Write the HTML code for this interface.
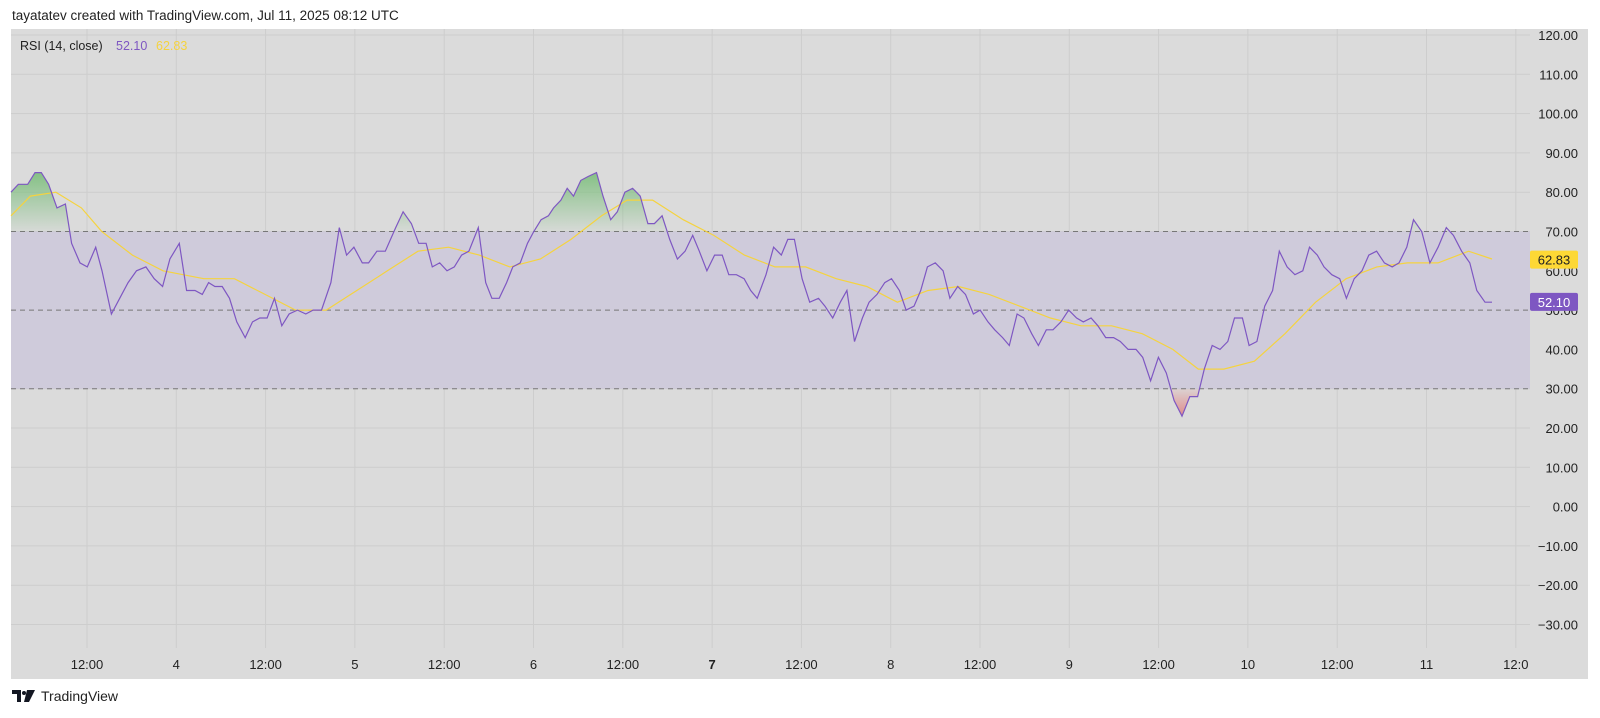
<!DOCTYPE html>
<html><head><meta charset="utf-8"><style>
body{margin:0;width:1600px;height:718px;background:#fff;overflow:hidden;font-family:"Liberation Sans","DejaVu Sans",sans-serif;position:relative}
.hdr{position:absolute;left:12px;top:8px;font-size:13.5px;color:#222}
.bg{position:absolute;left:11px;top:29px;width:1577px;height:650px;background:#dbdbdb}
svg{position:absolute;left:0;top:0}
.foot{position:absolute;left:12px;top:688px;font-size:14px;color:#222;display:flex;align-items:center;gap:5px}
</style></head><body>
<div class="hdr">tayatatev created with TradingView.com, Jul 11, 2025 08:12 UTC</div>
<div class="bg"></div>
<svg id="s" width="1600" height="718" font-family="Liberation Sans, DejaVu Sans, sans-serif"></svg>
<div class="foot"><svg width="24" height="12" viewBox="0 0 24 12" style="position:static"><path d="M0 0h9v12H5V4H0z M15 0h8l-6 12h-5z" fill="#131722"/><circle cx="12" cy="3" r="2" fill="#131722"/></svg><span>TradingView</span></div>
<script>
const S=document.getElementById('s');
const L=11,R=1530,Y=v=>35+(120-v)*3.93;
let h='';
for(let v=-30;v<=120;v+=10){h+=`<line x1="${L}" x2="${R}" y1="${Y(v)}" y2="${Y(v)}" stroke="#cdcdcd" stroke-width="1"/>`;}
const tl=['12:00','4','12:00','5','12:00','6','12:00','7','12:00','8','12:00','9','12:00','10','12:00','11','12:0'];
tl.forEach((t,i)=>{const x=87+89.3*i;h+=`<line x1="${x}" x2="${x}" y1="29" y2="648" stroke="#cdcdcd"/>`;h+=`<text x="${x}" y="669" font-size="13" fill="#222" text-anchor="middle" ${t=='7'?'font-weight="bold"':''}>${t}</text>`;});
h+=`<rect x="${L}" y="${Y(70)}" width="${R-L}" height="${Y(30)-Y(70)}" fill="#cfcbdb"/>`;
[70,50,30].forEach(v=>h+=`<line x1="${L}" x2="${R}" y1="${Y(v)}" y2="${Y(v)}" stroke="#777" stroke-dasharray="5,4"/>`);
for(let v=-30;v<=120;v+=10){h+=`<text x="1578" y="${Y(v)+5}" font-size="13" fill="#222" text-anchor="end">${v<0?'\u2212'+(-v)+'.00':v+'.00'}</text>`;}
const raw=[11,80,18,82,27,82,34,85,40,85,47,82,55,76,63,77,69,67,77,62,84,61,92,66,98,60,107,49,115,53,123,57,131,60,140,61,148,58,156,56,163,63,172,67,179,55,187,55,194,54,200,57,206,56,213,56,220,53,227,47,235,43,242,47,249,48,256,48,263,53,270,46,277,49,285,50,293,49,300,50,308,50,317,57,325,71,332,64,339,66,347,62,353,62,361,65,369,65,379,71,386,75,394,72,401,67,408,67,414,61,421,62,428,60,435,61,442,64,449,65,458,71,465,57,471,53,478,53,485,57,491,61,498,62,505,67,511,70,518,73,525,74,530,76,537,78,543,81,549,79,556,83,563,84,571,85,577,79,584,73,590,75,597,80,604,81,611,79,618,72,624,72,631,74,638,68,645,63,652,65,659,69,665,65,672,60,679,64,686,64,692,59,699,59,706,58,712,55,718,53,726,59,733,66,740,64,746,68,752,68,759,58,766,52,774,53,780,51,787,48,794,52,800,55,807,42,814,48,820,52,827,54,834,57,840,58,847,55,853,50,860,51,866,55,872,61,879,62,886,60,892,53,899,56,906,54,913,49,919,50,926,47,932,45,939,43,945,41,952,49,958,48,965,44,971,41,978,45,984,45,991,47,998,50,1005,48,1011,47,1018,48,1024,46,1031,43,1038,43,1044,42,1051,40,1058,40,1064,38,1071,32,1078,38,1085,34,1092,27,1099,23,1106,28,1113,28,1119,35,1126,41,1133,40,1140,42,1146,48,1153,48,1159,41,1166,42,1173,51,1180,55,1186,65,1193,61,1200,59,1207,60,1213,66,1220,64,1226,61,1233,59,1240,58,1246,53,1253,58,1260,60,1266,64,1273,65,1280,62,1287,61,1293,62,1300,66,1306,73,1313,70,1320,62,1327,66,1334,71,1340,69,1347,65,1354,62,1360,55,1367,52,1373,52];
const A=[[11,11],[571,585],[807,838],[1099,1159],[1306,1386],[1373,1463]];
function mp(x){for(let i=0;i<A.length-1;i++){const[a,b]=A[i],[c,d]=A[i+1];if(x<=c)return b+(x-a)*(d-b)/(c-a);}return 1463;}
const act=x=>11+(x-11)*1.02;
let pts=[];for(let i=0;i<raw.length;i+=2)pts.push([act(mp(raw[i])),Y(raw[i+1])]);
const P=pts.map(p=>p[0].toFixed(1)+','+p[1].toFixed(1)).join(' ');
const x0=pts[0][0],x1=pts[pts.length-1][0];
h+=`<defs><linearGradient id="g" x1="0" y1="${Y(86)}" x2="0" y2="${Y(70)}" gradientUnits="userSpaceOnUse"><stop offset="0" stop-color="#7fbf7f"/><stop offset="1" stop-color="#7fbf7f" stop-opacity="0.05"/></linearGradient>
<linearGradient id="r" x1="0" y1="${Y(30)}" x2="0" y2="${Y(22)}" gradientUnits="userSpaceOnUse"><stop offset="0" stop-color="#e08080" stop-opacity="0.1"/><stop offset="1" stop-color="#e08080"/></linearGradient>
<clipPath id="ca"><rect x="0" y="0" width="1600" height="${Y(70)}"/></clipPath><clipPath id="cb"><rect x="0" y="${Y(30)}" width="1600" height="300"/></clipPath></defs>`;
h+=`<polygon clip-path="url(#ca)" points="${x0},${Y(70)} ${P} ${x1},${Y(70)}" fill="url(#g)"/>`;
h+=`<polygon clip-path="url(#cb)" points="${x0},${Y(30)} ${P} ${x1},${Y(30)}" fill="url(#r)"/>`;
const ma=[11,74,30,79,55,80,80,76,100,70,130,64,160,60,200,58,230,58,260,54,290,50,320,50,350,55,380,60,410,65,440,66,470,64,500,61,530,63,560,68,590,74,615,78,640,78,670,73,700,69,730,64,760,61,790,61,820,58,850,56,880,52,910,55,940,56,970,54,1000,51,1030,48,1060,46,1090,46,1120,44,1150,40,1175,35,1200,35,1230,37,1260,44,1290,52,1320,58,1350,61,1380,62,1410,62,1440,65,1463,63];
let mp2=[];for(let i=0;i<ma.length;i+=2)mp2.push(act(ma[i]).toFixed(1)+','+Y(ma[i+1]).toFixed(1));
h+=`<polyline points="${mp2.join(' ')}" fill="none" stroke="#f5d33f" stroke-width="1.2"/>`;
h+=`<polyline points="${P}" fill="none" stroke="#7e57c2" stroke-width="1.2"/>`;
h+=`<rect x="1530" y="${Y(62.83)-9}" width="48" height="18" rx="2" fill="#fdd835"/><text x="1554" y="${Y(62.83)+5}" font-size="13" fill="#222" text-anchor="middle">62.83</text>`;
h+=`<rect x="1530" y="${Y(52.10)-9}" width="48" height="18" rx="2" fill="#7e57c2"/><text x="1554" y="${Y(52.10)+5}" font-size="13" fill="#fff" text-anchor="middle">52.10</text>`;
h+=`<text x="20" y="50" font-size="12.5" fill="#222">RSI (14, close)</text><text x="116" y="50" font-size="12.5" fill="#7e57c2">52.10</text><text x="156" y="50" font-size="12.5" fill="#f5d33f">62.83</text>`;
S.innerHTML=h;
</script>
</body></html>
